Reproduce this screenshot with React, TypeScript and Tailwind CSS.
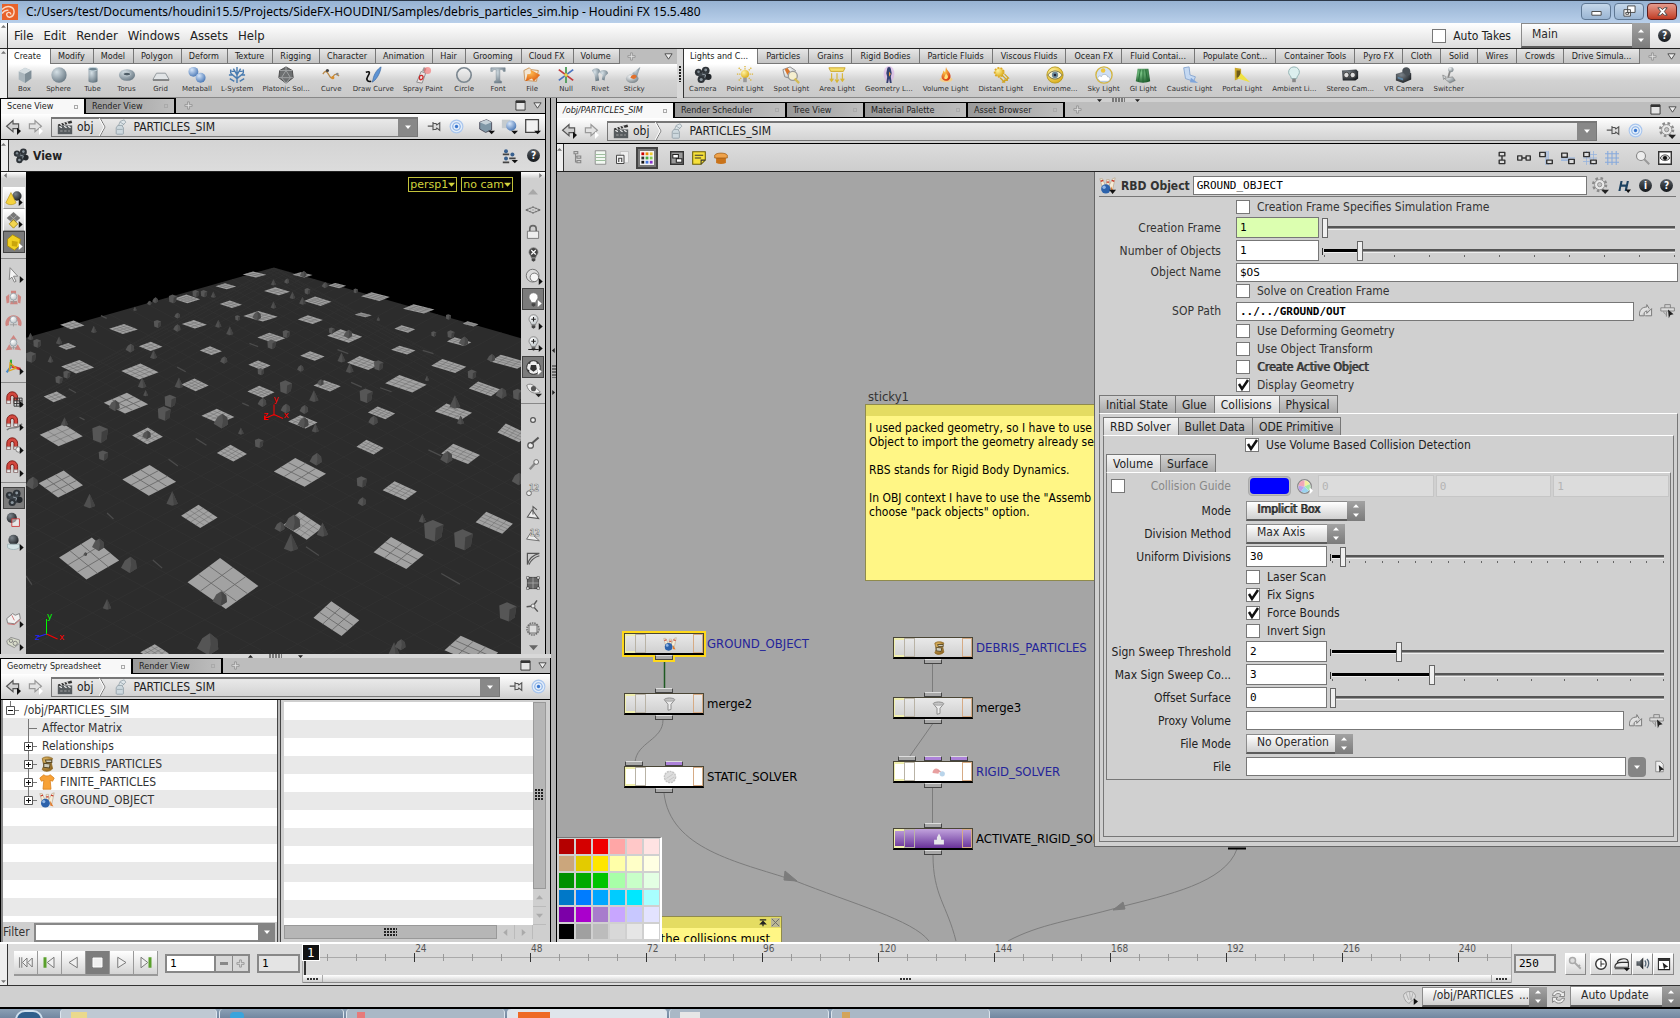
import React from "react";

/* ---------- shared pieces ---------- */

type Kids = { children?: React.ReactNode };

function Svg({ s = "size-5", box = "0 0 20 20", children }: Kids & { s?: string; box?: string }) {
  return (
    <svg viewBox={box} className={`${s} shrink-0`} fill="none" aria-hidden="true">
      {children}
    </svg>
  );
}

function Defs() {
  const stops: [string, string, string][] = [
    ["grey", "#f2f4f5", "#6f7a80"],
    ["steel", "#d5e0e6", "#62727d"],
    ["blue", "#d6e6fa", "#3f6fb0"],
    ["yellow", "#fff2a0", "#d9a80c"],
    ["dark", "#7d858c", "#16191c"],
    ["fire", "#ffd34d", "#d42a0a"],
    ["green", "#7fc98b", "#1c5a2b"],
    ["orange", "#ffb84d", "#d9540b"],
    ["pale", "#ffffff", "#b9c0c4"],
    ["tan", "#e8c06a", "#8a5f1c"],
  ];
  return (
    <svg className="absolute size-0" aria-hidden="true">
      <defs>
        {stops.map(([id, a, b]) => (
          <radialGradient key={id} id={id} cx="0.35" cy="0.3" r="0.8">
            <stop offset="0" stopColor={a} />
            <stop offset="1" stopColor={b} />
          </radialGradient>
        ))}
      </defs>
    </svg>
  );
}

const Tri = ({ d = "down", c = "#222", s = "size-2" }: { d?: "down" | "right" | "up" | "left"; c?: string; s?: string }) => (
  <Svg s={s} box="0 0 8 8">
    <path
      d={d === "down" ? "M0 2h8L4 6.500z" : d === "up" ? "M0 6h8L4 1.500z" : d === "right" ? "M2 0v8l4.500-4z" : "M6 0v8L1.500 4z"}
      fill={c}
    />
  </Svg>
);

function Spin() {
  return (
    <span className="pointer-events-none absolute inset-y-0 right-0 flex w-[18px] flex-col items-center justify-center gap-[3px] bg-gradient-to-b from-[#a2a2a2] to-[#7b7b7b]">
      <Tri d="up" c="#fff" s="size-[6px]" />
      <Tri c="#fff" s="size-[6px]" />
    </span>
  );
}

function Pick({ id, value, w, bold, label, h = "h-[20px]" }: { id: string; value: string; w: string; bold?: boolean; label?: string; h?: string }) {
  return (
    <span className={`relative block shrink-0 ${w} ${h}`}>
      <select
        id={id}
        aria-label={label}
        className={`block size-full appearance-none border border-b-2 border-[#8b8b8b] border-b-[#5c5c5c] bg-gradient-to-b from-white to-[#d0d0d0] pb-[2px] pl-[10px] pr-[18px] text-[12px] leading-none text-[#2a2a2a] ${bold ? "[text-shadow:1px_0_0_#2a2a2a]" : ""}`}
      >
        <option>{value}</option>
      </select>
      <Spin />
    </span>
  );
}

function Check({ id, on, children, bold }: Kids & { id: string; on?: boolean; bold?: boolean }) {
  return (
    <span className="flex items-center gap-[7px]">
      <span className="relative block size-[14px] shrink-0">
        <input
          id={id}
          type="checkbox"
          defaultChecked={on}
          className="peer block size-[14px] appearance-none border border-[#777] bg-white"
        />
        <svg viewBox="0 0 14 14" className="pointer-events-none absolute inset-0 hidden size-[14px] peer-checked:block" aria-hidden="true">
          <path d="M3 6l3 5 6-9" stroke="#111" strokeWidth="2.500" fill="none" />
        </svg>
      </span>
      {children && (
        <label htmlFor={id} className={`whitespace-nowrap text-[12px] ${bold ? "[text-shadow:1px_0_0_#333]" : ""}`}>
          {children}
        </label>
      )}
    </span>
  );
}

function Slider({ pct, ticks = 0, label }: { pct: number; ticks?: number; label: string }) {
  return (
    <span className="relative mx-[3px] block h-[20px] min-w-0 flex-1">
      <span className="absolute inset-x-[2px] top-[8px] h-[4px] border-t-2 border-b border-t-[#555] border-b-[#eee] bg-[#999]" />
      {pct > 0 && <span className="absolute left-[2px] top-[8px] h-[3px] bg-black" style={{ width: `${pct}%` }} />}
      {pct > 0 && <span className="absolute left-0 top-[7px] h-[7px] w-px bg-[#333]" />}
      {ticks > 0 && (
        <span className="absolute inset-x-[2px] top-[14px] flex justify-between">
          {Array.from({ length: ticks }, (_, i) => (
            <span key={i} className="h-[2px] w-px bg-[#666]" />
          ))}
        </span>
      )}
      <input
        type="range"
        min={0}
        max={1000}
        defaultValue={pct * 10}
        aria-label={label}
        className="absolute inset-0 m-0 block h-[20px] w-full appearance-none bg-transparent [&::-webkit-slider-thumb]:h-[20px] [&::-webkit-slider-thumb]:w-[6px] [&::-webkit-slider-thumb]:appearance-none [&::-webkit-slider-thumb]:border [&::-webkit-slider-thumb]:border-[#666] [&::-webkit-slider-thumb]:bg-[#f0f0f0]"
      />
    </span>
  );
}

/* ---------- small icons ---------- */

const HelpIcon = ({ t = "?" }: { t?: string }) => (
  <span className="flex size-[13px] shrink-0 items-center justify-center rounded-full bg-gradient-to-b from-[#5a6066] to-[#14181c] text-[10px] font-bold leading-none text-white">
    {t}
  </span>
);

const Gear = () => (
  <Svg s="size-[17px]">
    <circle cx="9" cy="9" r="7.500" stroke="#8a8a8a" strokeWidth="3" strokeDasharray="3 2.900" />
    <circle cx="9" cy="9" r="6" fill="#e8e8e8" stroke="#8a8a8a" />
    <circle cx="9" cy="9" r="2.500" fill="#c4c4c4" stroke="#8a8a8a" />
    <path d="M11 15h9l-4.500 5z" fill="#222" />
  </Svg>
);

const Pin = () => (
  <Svg s="size-[15px]">
    <path d="M1 9.500h7M8 4v11M8 6h4l1 2 4-3v10l-4-3-1 2H8z" stroke="#555" strokeWidth="1.500" fill="#ddd" />
  </Svg>
);

const Target = () => (
  <Svg s="size-[15px]">
    <circle cx="10" cy="10" r="8.500" stroke="#a9c6ee" strokeWidth="1.500" fill="#e3edf9" />
    <circle cx="10" cy="10" r="5" stroke="#86aee4" strokeWidth="1.500" />
    <circle cx="10" cy="10" r="2.200" fill="#3a78d0" />
  </Svg>
);

const Clapper = () => (
  <Svg s="size-4">
    <path d="M1 8h18v11H1z" fill="#565b5e" />
    <path d="M1 7l17-5 1 3L2 9z" fill="#333" />
    <path d="M4 5.500l2 2.500M8 4.500l2 2.500M12 3.500l2 2.500M3 9l3 2M9 9l3 2M14 9l3 2" stroke="#eee" strokeWidth="1.500" />
    <path d="M4 15h3M9 15h3M14 15h2" stroke="#bbb" />
  </Svg>
);

const Salt = () => (
  <Svg s="size-4">
    <path d="M4 11l2-3h5l2 3v7a1 1 0 01-1 1H5a1 1 0 01-1-1z" fill="#cdd8de" stroke="#8d9ca5" />
    <path d="M7 8l2-5 5-2 2 3-4 4z" fill="#dfe6ea" stroke="#94a2aa" />
    <path d="M5 13h7M9 4l5 3" stroke="#94a2aa" />
  </Svg>
);

const NavArrow = ({ dim, flip }: { dim?: boolean; flip?: boolean }) => (
  <Svg s="size-[16px]">
    <path
      d={flip ? "M18 9l-8-7v4H3v6h7v4z" : "M2 9l8-7v4h7v6h-7v4z"}
      fill={dim ? "#e2e2e2" : "#d0d0d0"}
      stroke={dim ? "#999" : "#555"}
      strokeWidth="1.500"
    />
    <path d="M15 11l5 4-5 5z" fill={dim ? "#fff" : "#111"} />
  </Svg>
);

const Bowling = ({ s = "size-4", arrow }: { s?: string; arrow?: boolean }) => (
  <Svg s={s}>
    <path d="M1 2l3 0 4 9-4 2zM9 3h3l0 11H9zM19 1l-3 1-5 10 5 3z" fill="#f6ecd8" stroke="#b8a58a" strokeWidth="0.800" />
    <path d="M2 5l3-1M9 6h3M15 4l3 1" stroke="#c8382a" strokeWidth="1.600" />
    <circle cx="8" cy="14" r="5.500" fill="#2c62ab" />
    <circle cx="6" cy="12" r="2" fill="#8fb6e6" />
    <path d="M14 11l4 7-4-1z" fill="#e07a2c" />
    {arrow && <path d="M12 15h8l-4 5z" fill="#111" />}
  </Svg>
);

const Bin = ({ s = "size-4" }: { s?: string }) => (
  <Svg s={s}>
    <path d="M4 3c4-3 10-2 13 0l-2 4 2 9c-4 4-10 4-13 1l2-5z" fill="url(#tan)" stroke="#8f6a24" />
    <path d="M8 5h8v3H9zM6 9l8 1-1 5-7-1z" fill="#cfccbc" stroke="#5a4a26" strokeWidth="1.300" />
  </Svg>
);

const Shirt = () => (
  <Svg s="size-4">
    <path d="M1 5l5-4c2 2 6 2 8 0l5 4-2 4-3-1 1 11H5L6 8 3 9z" fill="#f7a136" stroke="#d9821e" />
  </Svg>
);

const Funnel = ({ s = "size-4" }: { s?: string }) => (
  <Svg s={s}>
    <path d="M3 5c0-3 14-3 14 0l-5 6v7l-4 1v-8z" fill="#ececec" stroke="#8c8c8c" strokeWidth="1.300" />
    <ellipse cx="10" cy="5" rx="6.500" ry="2" fill="#c4c4c4" stroke="#999" />
  </Svg>
);

const reels = (
  <>
    <circle cx="13" cy="5" r="4.300" fill="#2e3338" />
    <circle cx="5" cy="7" r="4" fill="#2e3338" />
    <path d="M5 8l10-1 2 7-8 3-4-3z" fill="#3d444a" />
    <circle cx="16" cy="12" r="3.500" fill="#23272b" />
    <circle cx="8" cy="15" r="4" fill="#2e3338" />
    <circle cx="13" cy="4.500" r="1.600" fill="#8b969e" />
    <circle cx="5" cy="6.500" r="1.500" fill="#7b868e" />
    <circle cx="8" cy="15" r="1.700" fill="#8b969e" />
    <path d="M9 9l4 1-1 3" stroke="#98a3ab" />
  </>
);
const CameraIcon = ({ s = "size-[18px]" }: { s?: string }) => <Svg s={s}>{reels}</Svg>;

const Bulb = ({ s = "size-4", fill = "url(#pale)", mark }: { s?: string; fill?: string; mark?: string }) => (
  <Svg s={s}>
    <path d="M10 1c-4 0-6 3-6 6s3 4 3 7h6c0-3 3-4 3-7s-2-6-6-6z" fill={fill} stroke="#777" />
    <path d="M7.500 15h5v3l-2.500 1.500L7.500 18z" fill="#444" />
    {mark && <path d={mark} stroke={fill === "#444" ? "#fff" : "#222"} strokeWidth="1.500" />}
  </Svg>
);

const Magnet = ({ extra }: { extra?: React.ReactNode }) => (
  <Svg s="size-[18px]">
    <path d="M2 15V8a6 6 0 0112 0v7h-4V8a2 2 0 00-4 0v7z" fill="#d2473e" stroke="#7a1510" />
    <path d="M2 12h4v3H2zM10 12h4v3h-4z" fill="#eee" stroke="#888" strokeWidth="0.700" />
    {extra}
  </Svg>
);

const Jump = () => (
  <Svg s="size-4">
    <path d="M2 16c-1-7 3-11 9-11V2l3 5M2 16h6c-1-3 0-6 3-6v3l6-6v9H9" stroke="#777" strokeWidth="1.200" fill="#e0e0e0" />
  </Svg>
);

const Chooser = () => (
  <Svg s="size-4">
    <path d="M1 6h17v4H1z" fill="#ddd" stroke="#777" />
    <path d="M6 6V2h7v4M8 11v6M4 11l3 3" stroke="#777" />
    <path d="M10 8l7 6-4 1-2 4z" fill="#222" />
  </Svg>
);

/* ---------- shelf ---------- */

const shelfIcons: Record<string, React.ReactNode> = {
  Box: (
    <>
      <path d="M3 6l7-4 7 3v9l-7 5-7-4z" fill="#a9b5bc" />
      <path d="M3 6l7-4 7 3-7 4z" fill="#d5dde1" />
      <path d="M10 9l7-4v9l-7 5z" fill="#7f8e97" />
    </>
  ),
  Sphere: <circle cx="10" cy="10" r="8.500" fill="url(#steel)" />,
  Tube: (
    <>
      <path d="M5 3v14c0 2 10 2 10 0V3z" fill="url(#steel)" />
      <ellipse cx="10" cy="3.500" rx="5" ry="2" fill="#6f8591" stroke="#cad8df" />
    </>
  ),
  Torus: (
    <>
      <ellipse cx="10" cy="10" rx="9" ry="6.500" fill="url(#steel)" />
      <ellipse cx="10" cy="9" rx="4" ry="2" fill="#4d5c66" stroke="#c4d0d6" />
    </>
  ),
  Grid: (
    <>
      <path d="M5 8h10l4 7H1z" fill="#e1e4e6" stroke="#8b9296" />
      <path d="M1 15h18v1.500H1z" fill="#777" />
    </>
  ),
  Metaball: (
    <>
      <circle cx="6" cy="6.500" r="5.500" fill="url(#blue)" />
      <circle cx="14" cy="13" r="5.500" fill="url(#blue)" />
    </>
  ),
  "L-System": (
    <path d="M10 19v-9M10 14L3 8M10 14l7-6M10 10L6 3M10 10l4-7M5 10H1M15 10h4M3 8V4M17 8V4M8 6H4M12 6h4M10 10V1M7 17l-5-3M13 17l5-3" stroke="#4a7cb0" strokeWidth="1.600" />
  ),
  "Platonic Sol...": (
    <>
      <path d="M10 1l7 4 1 8-8 6-8-6 1-8z" fill="#6d6f70" stroke="#444" />
      <path d="M10 5l5 8H5zM10 1v4M3 5h14M2 13h3M18 13h-3M10 19l-5-6M10 19l5-6" stroke="#a5a7a8" />
    </>
  ),
  Curve: (
    <>
      <path d="M1 9c5-9 7 6 10 4s2-6 8-2" stroke="#b98a4a" strokeWidth="1.500" />
      <circle cx="6" cy="5" r="1.800" fill="#444" />
      <circle cx="12" cy="13" r="1.800" fill="#d98d2a" />
      <circle cx="17" cy="9" r="1.500" fill="#888" />
    </>
  ),
  "Draw Curve": (
    <>
      <path d="M2 7c6-2 4 2 2 5s0 6 4 5" stroke="#111" strokeWidth="1.800" />
      <path d="M19 1c-4 2-8 8-9 14l-1 3c4-2 9-9 10-17z" fill="#5d93d4" stroke="#3a669c" strokeWidth="0.700" />
    </>
  ),
  "Spray Paint": (
    <>
      <path d="M3 18l5-12 5 2-4 11z" fill="#e9e4e4" stroke="#888" />
      <path d="M9 5l2-4 3 2-2 4z" fill="#999" />
      <path d="M6 13c0-4 5-3 4 0s-4 3-4 0z" stroke="#cc2a2a" strokeWidth="1.500" />
      <circle cx="15" cy="5" r="4" fill="#f36b6b" fillOpacity="0.600" />
    </>
  ),
  Circle: <circle cx="10" cy="10" r="8" stroke="#7b8790" strokeWidth="1.800" />,
  Font: <path d="M2 2h16v4h-2l-1-2h-3v12l2 1v2H6v-2l2-1V4H5L4 6H2z" fill="url(#steel)" stroke="#7c8b94" strokeWidth="0.600" />,
  File: (
    <>
      <path d="M1 5l6-3 2 2 8 1-2 12-13-1z" fill="#f2e6d4" stroke="#c79256" />
      <path d="M3 17l2-8c5 1 4-3 3-5l11 6-7 7-2-3z" fill="url(#orange)" />
    </>
  ),
  Null: (
    <>
      <path d="M10 1v18" stroke="#4c9b57" strokeWidth="2" />
      <path d="M2 4l16 12" stroke="#c33d3d" strokeWidth="2" />
      <path d="M18 4L2 16" stroke="#4b74c0" strokeWidth="2" />
      <circle cx="10" cy="10" r="2" fill="#ecd34b" />
    </>
  ),
  Rivet: (
    <>
      <path d="M1 5c3-4 9-3 9 1l-2 3 1 7-4 1-1-7z" fill="url(#steel)" />
      <path d="M9 7c3-4 9-3 10 1l-3 3-1 5-3-1 1-5z" fill="url(#steel)" />
    </>
  ),
  Sticky: (
    <>
      <ellipse cx="8" cy="14" rx="7" ry="5" fill="url(#grey)" />
      <path d="M17 1l-9 7 5 5z" fill="url(#steel)" />
      <path d="M6 13c1-4 5-4 7-2-1 4-4 4-7 2z" fill="#e2702a" />
    </>
  ),
  Camera: reels,
  "Point Light": (
    <>
      <path d="M10 0v4M1 9h4M15 9h4M3 2l3 3M17 2l-3 3M3 16l3-3M17 16l-3-3" stroke="#dcb63c" strokeWidth="1.500" strokeDasharray="1.500 1" />
      <circle cx="10" cy="9" r="4.500" fill="url(#yellow)" />
      <path d="M8 13h4v5H8z" fill="#999" />
    </>
  ),
  "Spot Light": (
    <>
      <path d="M1 4l8-3 6 4-5 9-7-2z" fill="url(#pale)" stroke="#888" />
      <path d="M3 4l3-2 3 4-3 4z" fill="#d9762c" />
      <circle cx="12" cy="11" r="5" fill="#f5efcf" stroke="#999" strokeWidth="1.500" />
      <path d="M14 14l5 5" stroke="#d3bb55" strokeWidth="2.500" />
    </>
  ),
  "Area Light": (
    <>
      <path d="M1 2h18l-2 4H3z" fill="#f6df6b" stroke="#c9a427" />
      <path d="M4 8v9M10 8v10M16 8v9M2 14l2 3 2-3M8 15l2 3 2-3M14 14l2 3 2-3" stroke="#d8b638" strokeWidth="1.300" />
    </>
  ),
  "Geometry L...": (
    <>
      <ellipse cx="10" cy="9" rx="6" ry="9" fill="#d9b5e6" fillOpacity="0.700" />
      <path d="M8 3a2 2 0 114 0l1 5-1 4 1 7h-2l-1-5-1 5H7l1-7-1-4z" fill="#33406e" />
      <path d="M10 6l2 3-2 3z" fill="#f0a23a" />
    </>
  ),
  "Volume Light": (
    <>
      <ellipse cx="10" cy="15" rx="7" ry="3" fill="#f3cf8d" />
      <path d="M10 1c1 4 5 6 5 10a5 5 0 01-10 1c0-3 2-4 2-7l2 2z" fill="url(#fire)" />
      <path d="M10 8c1 2 3 3 2 5s-4 2-4 0z" fill="#ffe27a" />
    </>
  ),
  "Distant Light": (
    <>
      <circle cx="8" cy="7" r="5" fill="url(#yellow)" stroke="#dca92b" strokeWidth="2" strokeDasharray="2 1.500" />
      <path d="M11 10l6 6M14 9l5 5M9 13l5 5M17 13v3h-3M14 15v3h-3" stroke="#d0a524" strokeWidth="1.400" />
    </>
  ),
  "Environme...": (
    <>
      <circle cx="10" cy="10" r="9" fill="url(#yellow)" stroke="#b89a1e" />
      <path d="M2 10c4-6 12-6 16 0-4 6-12 6-16 0z" fill="#f7f2d2" stroke="#6d6a44" />
      <circle cx="10" cy="10" r="3.500" fill="#6b8a9c" />
      <circle cx="10" cy="10" r="1.500" fill="#223" />
    </>
  ),
  "Sky Light": (
    <>
      <circle cx="10" cy="10" r="9" fill="#cfdff5" stroke="#d3b541" strokeWidth="1.500" />
      <path d="M3 14c0-3 3-4 4-2 1-4 7-3 7 0 4 0 3 5 0 5H6z" fill="#fff" stroke="#9ab" strokeWidth="0.700" />
      <circle cx="9" cy="5" r="2.500" fill="#f0c63c" />
    </>
  ),
  "GI Light": (
    <>
      <path d="M4 3h12l2 14c-4 2-12 2-16 0z" fill="url(#green)" />
      <path d="M7 4L5 17M10 4v14M13 4l2 13" stroke="#1f6a31" />
    </>
  ),
  "Caustic Light": (
    <>
      <path d="M3 2l6-1 1 9 6 2-2 5-9-3z" fill="#c5d9f2" stroke="#86a5cf" />
      <path d="M11 13l8 6-9-1z" fill="#7fa5da" />
    </>
  ),
  "Portal Light": (
    <>
      <path d="M2 2l7 1v10l-7 3z" fill="#c9a72a" />
      <path d="M4 5h4v7l-4 1z" fill="#6c5a1a" />
      <path d="M9 8l10 10-10-3-4-1z" fill="#efe244" />
    </>
  ),
  "Ambient Li...": (
    <>
      <path d="M10 1c-4 0-6 3-6 6s3 4 3 7h6c0-3 3-4 3-7s-2-6-6-6z" fill="#dcefee" stroke="#8fb0b0" />
      <path d="M8 14h4v4H8z" fill="#888" />
    </>
  ),
  "Stereo Cam...": (
    <>
      <path d="M1 5l16-1 2 2v8l-3 2H2z" fill="url(#dark)" />
      <circle cx="6" cy="10" r="3" fill="#ddd" stroke="#333" />
      <circle cx="13" cy="10" r="3" fill="#ddd" stroke="#333" />
    </>
  ),
  "VR Camera": (
    <>
      <path d="M1 9l9-3 8 2v7l-9 4-8-3z" fill="url(#dark)" />
      <path d="M8 6c0-6 9-6 9 0v4l-4 1z" fill="#4b5258" />
      <path d="M3 12l6 2v2l-6-2z" fill="#5d86a5" />
    </>
  ),
  Switcher: (
    <>
      <circle cx="12" cy="4" r="3" fill="url(#grey)" />
      <path d="M11 6l-2 7" stroke="#888" strokeWidth="2" />
      <path d="M3 10l4 2-3 3zM5 14l9-2 3 4-6 3z" fill="url(#grey)" stroke="#777" strokeWidth="0.600" />
    </>
  ),
};

function Shelf({ tabs, tools, label, tabPad, toolPad }: { tabs: string[]; tools: string[]; label: string; tabPad: string; toolPad: string }) {
  return (
    <>
      <nav className="flex h-[15px] items-stretch bg-[#bdbdbd]" aria-label={label}>
        {tabs.map((t, i) => (
          <button
            key={t}
            className={`flex items-center whitespace-nowrap border-r border-[#777] text-[9px] leading-none text-[#222] ${
              i === 0 ? "bg-white pl-[6px] pr-[9px]" : `border-b bg-gradient-to-b from-[#e6e6e6] to-[#c4c4c4] ${tabPad}`
            }`}
          >
            {t}
          </button>
        ))}
        <span className="flex w-6 items-center justify-center">
          <Plus />
        </span>
        <span className="ml-auto flex items-center pr-1">
          <Drop />
        </span>
      </nav>
      <div className="flex h-[34px] items-start border-b border-[#888] bg-gradient-to-b from-white via-[#d2d2d2] to-[#c9c9c9] pt-[2px]">
        {tools.map((t) => (
          <button key={t} className={`flex min-w-[34px] flex-col items-center ${toolPad}`}>
            <Svg s="size-[18px]">{shelfIcons[t]}</Svg>
            <span className="whitespace-nowrap font-['DejaVu_Sans',sans-serif] text-[7px] leading-[10px] text-[#333]">{t}</span>
          </button>
        ))}
      </div>
    </>
  );
}

const Plus = () => (
  <Svg s="size-[9px]" box="0 0 10 10">
    <path d="M4 1h2v3h3v2H6v3H4V6H1V4h3z" fill="#ddd" stroke="#888" strokeWidth="0.800" />
  </Svg>
);
const Drop = () => (
  <Svg s="size-[9px]" box="0 0 10 10">
    <path d="M1 2h8L5 8z" fill="#eee" stroke="#444" />
  </Svg>
);
const Maxi = () => (
  <Svg s="size-[11px]" box="0 0 12 12">
    <path d="M1 1h10v10H1z" fill="#e4e4e4" stroke="#333" />
    <path d="M1 2h10" stroke="#333" strokeWidth="2.500" />
  </Svg>
);

function PaneTabs({ tabs }: { tabs: { t: string; w: string; i?: boolean }[] }) {
  return (
    <nav className="flex h-[16px] shrink-0 items-stretch border-b border-black bg-[#bdbdbd]">
      {tabs.map((x, i) => (
        <button
          key={x.t}
          className={`flex items-center justify-between whitespace-nowrap border-r-2 border-t border-black pl-[6px] pr-[6px] text-[9px] leading-none text-[#222] ${x.w} ${
            i === 0 ? "-mb-px bg-[#f8f8f8]" : "bg-gradient-to-r from-[#999] to-[#bebebe]"
          } ${x.i ? "italic" : ""}`}
        >
          {x.t}
          <span className="size-[4px] border border-[#aaa]" />
        </button>
      ))}
      <span className="flex w-6 items-center justify-center">
        <Plus />
      </span>
      <span className="ml-auto flex items-center gap-[7px] pr-[3px]">
        <Maxi />
        <Drop />
      </span>
    </nav>
  );
}

function PathBar({ children }: Kids) {
  return (
    <div className="flex h-[26px] shrink-0 items-center border-b border-black bg-gradient-to-b from-white to-[#cfcfcf] px-[4px]">
      <button aria-label="Back" className="mr-[6px]">
        <NavArrow />
      </button>
      <button aria-label="Forward" className="mr-[8px]">
        <NavArrow flip dim />
      </button>
      <div className="flex h-[20px] min-w-0 flex-1 items-center border border-t-2 border-[#777] bg-gradient-to-b from-[#e9e9e9] to-[#d3d3d3] pl-[5px] text-[12px] leading-none text-[#222]">
        <Clapper />
        <span className="ml-1">obj</span>
        <Svg s="ml-[6px] h-[18px] w-[7px]" box="0 0 7 18">
          <path d="M1 0l5 9-5 9" stroke="#777" />
          <path d="M0 0l5 9-5 9" stroke="#fff" />
        </Svg>
        <span className="ml-[7px] mr-[4px]">
          <Salt />
        </span>
        <span>PARTICLES_SIM</span>
        <button aria-label="Path history" className="ml-auto flex h-full w-[19px] items-center justify-center bg-[#888]">
          <Tri c="#fff" s="size-[6px]" />
        </button>
      </div>
      <div className="flex shrink-0 items-center pl-[9px]">{children}</div>
    </div>
  );
}

/* ---------- 3D viewport ---------- */

const tiles: number[][] = [
  [714, 313, 33, 9], [848, 314, 28, 8], [634, 348, 29, 9], [777, 363, 36, 12], [945, 346, 25, 8], [1052, 379, 40, 13],
  [891, 393, 38, 14], [525, 386, 37, 13], [648, 402, 31, 11], [1173, 416, 44, 14], [1018, 434, 24, 7], [205, 464, 34, 13],
  [348, 476, 40, 15], [546, 462, 35, 13], [731, 438, 48, 16], [870, 448, 35, 13], [1318, 461, 22, 8], [1134, 476, 29, 11],
  [191, 528, 25, 10], [424, 528, 33, 14], [761, 502, 39, 15], [966, 497, 49, 20], [1286, 514, 34, 13], [592, 541, 31, 13],
  [1130, 539, 34, 13], [876, 557, 34, 14], [220, 589, 46, 20], [394, 603, 52, 24], [728, 584, 31, 14], [1020, 578, 47, 21],
  [1257, 587, 49, 21], [1425, 574, 52, 21], [157, 679, 32, 16], [548, 643, 38, 19], [732, 664, 38, 18], [917, 646, 38, 17],
  [1137, 640, 58, 26], [1357, 655, 44, 22], [355, 698, 62, 31], [612, 737, 46, 22], [849, 754, 41, 20], [1069, 727, 38, 19],
  [1270, 724, 52, 25], [1435, 787, 42, 28], [174, 794, 60, 33], [415, 796, 43, 25], [651, 848, 42, 25], [1037, 830, 38, 22],
  [1290, 850, 54, 30], [841, 905, 73, 43], [173, 940, 62, 40], [420, 929, 75, 46], [1120, 960, 48, 28], [560, 1037, 51, 35],
  [252, 1163, 84, 63], [626, 1238, 99, 76], [850, 1065, 55, 42], [1117, 1147, 70, 48], [1384, 1056, 52, 33],
  [943, 1343, 64, 52], [435, 1445, 40, 25], [1320, 1440, 75, 46],
];
const cubes: number[][] = [
  [573, 370, 9], [550, 370, 9], [486, 386, 11], [443, 461, 10], [862, 363, 8], [803, 491, 10], [107, 519, 11], [90, 560, 14],
  [802, 650, 17], [1026, 676, 18], [1061, 585, 13], [479, 692, 16], [462, 729, 18], [283, 791, 22], [292, 855, 13],
  [1263, 492, 10], [1322, 612, 12], [168, 628, 10], [190, 612, 10], [762, 522, 12], [1215, 1080, 27], [1298, 1107, 26],
  [1422, 1323, 24], [1014, 934, 14], [732, 604, 9], [727, 818, 12], [930, 481, 8], [1215, 491, 7], [997, 362, 6],
  [1256, 440, 7], [667, 443, 7], [1450, 672, 14],
];
const rocks: number[][] = [
  [850, 312, 9], [910, 345, 8], [436, 390, 8], [720, 437, 12], [975, 491, 12], [1298, 513, 13], [366, 533, 12], [497, 473, 10],
  [628, 569, 10], [620, 752, 20], [800, 714, 13], [852, 717, 12], [850, 757, 15], [1403, 668, 15], [322, 705, 15],
  [885, 866, 17], [1250, 860, 17], [1014, 993, 12], [277, 1122, 17], [363, 1182, 22], [617, 1283, 20], [583, 1420, 30],
  [820, 1056, 22], [784, 1068, 14], [1121, 1421, 15], [92, 937, 17], [1450, 925, 17], [735, 696, 12], [1045, 750, 13],
  [412, 793, 12], [498, 436, 8], [898, 636, 9], [804, 333, 7], [1375, 563, 11], [842, 594, 9], [420, 398, 6], [241, 1150, 5],
];
const cones: number[][] = [
  [767, 336, 7], [820, 375, 8], [848, 391, 9], [767, 404, 8], [613, 460, 9], [645, 481, 10], [265, 477, 8], [432, 552, 10],
  [400, 637, 12], [503, 637, 12], [880, 676, 13], [980, 592, 11], [957, 561, 11], [1274, 694, 15], [253, 990, 16],
  [484, 983, 16], [904, 1076, 16], [816, 1114, 20], [302, 1300, 12], [1104, 1440, 20], [183, 753, 10], [676, 781, 8],
  [88, 498, 8], [168, 510, 9], [144, 566, 8], [884, 772, 10], [1183, 1042, 10], [1290, 748, 10], [599, 373, 7],
  [410, 668, 7], [1196, 623, 6], [380, 415, 5], [1060, 445, 5],
];
const slivers: number[][] = [
  [285, 436, 16, 8], [550, 804, 30, 20], [474, 866, 26, 20], [195, 655, 20, 12], [498, 590, 24, 14], [430, 1168, 26, 24],
  [302, 1027, 18, 18], [984, 636, 30, 14], [1236, 1208, 52, 32], [858, 1128, 36, 26], [1200, 838, 36, 18], [946, 538, 30, 12],
  [1065, 652, 32, 12], [700, 519, 24, 10], [76, 1215, 16, 26], [225, 740, 14, 8], [1184, 540, 30, 10], [680, 698, 18, 8],
];

/* scene units are finer than pixels: 2.8 across, 3 down */
const P = (x: number, y: number) => `${(x / 2.8).toFixed(1)},${(y / 3).toFixed(1)}`;

function Tile({ t: [x, y, w, h] }: { t: number[] }) {
  const s = -(x - 450) / 2200;
  const L = [x - w, y - 0.05 * h];
  const T = [x + s * w, y - h];
  const R = [x + w, y + 0.1 * h];
  const B = [x - s * w, y + h];
  const mix = (a: number[], b: number[], k: number) => P(a[0] + (b[0] - a[0]) * k, a[1] + (b[1] - a[1]) * k);
  const n = w > 36 && w < 60 ? 4 : 3;
  let d = "";
  for (let i = 1; i < n; i++) d += `M${mix(L, T, i / n)}L${mix(B, R, i / n)}M${mix(L, B, i / n)}L${mix(T, R, i / n)}`;
  return (
    <>
      <path d={`M${P(L[0], L[1])}L${P(T[0], T[1])}L${P(R[0], R[1])}L${P(B[0], B[1])}z`} fill="#a2a2a2" />
      <path d={d} stroke="#6a6a6a" strokeWidth={w > 60 ? 0.9 : 0.5} />
    </>
  );
}

function Scene() {
  let grid = "";
  for (let i = 0; i < 34; i++) {
    const k = (i / 33) ** 1.8;
    grid += `M${P(768 - 1900 * k, 292 + 577 * k)}L${P(768 - 1900 * k + 2600, 292 + 577 * k + 1500)}`;
    grid += `M${P(768 + 1900 * k, 292 + 577 * k)}L${P(768 + 1900 * k - 2600, 292 + 577 * k + 1500)}`;
  }
  return (
    <svg viewBox="27 2 494 481" preserveAspectRatio="xMidYMid slice" className="size-full bg-black" role="img" aria-label="Perspective view">
      <clipPath id="floor">
        <path d={`M${P(768, 292)}L${P(1480, 510)}L${P(1480, 1460)}L${P(60, 1460)}L${P(60, 507)}z`} />
      </clipPath>
      <g clipPath="url(#floor)">
        <rect x="0" y="0" width="560" height="500" fill="#2c2c2c" />
        <path d={grid} stroke="#343434" strokeWidth="0.600" fill="none" />
      </g>
      {tiles.map((t, i) => (
        <Tile key={i} t={t} />
      ))}
      {slivers.map(([x, y, a, b], i) => (
        <path key={i} d={`M${P(x, y)}L${P(x + a, y + b)}`} stroke="#4c4c4c" strokeWidth="1.300" />
      ))}
      {cones.map(([x, y, s], i) => (
        <g key={i}>
          <path d={`M${P(x, y - s * 1.3)}L${P(x + s, y + s)}L${P(x, y + s * 1.4)}L${P(x - s, y + s)}z`} fill="#505050" />
          <path d={`M${P(x, y - s * 1.3)}L${P(x + s, y + s)}L${P(x + s * 0.3, y + s * 1.3)}z`} fill="#434343" />
        </g>
      ))}
      {rocks.map(([x, y, s], i) => (
        <g key={i}>
          <path d={`M${P(x - s, y + s * 0.4)}L${P(x - s * 0.5, y - s * 0.6)}L${P(x + s * 0.2, y - s * 1.1)}L${P(x + s * 0.9, y - s * 0.5)}L${P(x + s, y + s * 0.5)}L${P(x + s * 0.1, y + s * 1.1)}z`} fill="#555" />
          <path d={`M${P(x + s * 0.2, y - s * 1.1)}L${P(x + s * 0.9, y - s * 0.5)}L${P(x + s, y + s * 0.5)}L${P(x + s * 0.1, y + s * 1.1)}L${P(x + s * 0.3, y)}z`} fill="#474747" />
        </g>
      ))}
      {cubes.map(([x, y, s], i) => (
        <g key={i}>
          <path d={`M${P(x - s, y - s * 0.8)}L${P(x - s * 0.1, y - s * 1.2)}L${P(x + s, y - s * 0.7)}L${P(x + s * 0.8, y + s * 0.7)}L${P(x + s * 0.1, y + s * 1.2)}L${P(x - s * 0.9, y + s * 0.8)}z`} fill="#565656" />
          <path d={`M${P(x + s * 0.2, y - s * 0.3)}L${P(x + s, y - s * 0.7)}L${P(x + s * 0.8, y + s * 0.7)}L${P(x + s * 0.1, y + s * 1.2)}z`} fill="#3f3f3f" />
        </g>
      ))}
      <g fontFamily="DejaVu Sans" fontSize="9">
        <path d="M274.500 245V234M274.500 244l-9 4M274.500 244l9 4M265 245v4h4" stroke="red" />
        <text x="274" y="232" fill="red">y</text>
        <text x="264" y="248" fill="red">z</text>
        <text x="284" y="248" fill="red">x</text>
        <path d="M47.500 464V448" stroke="#0f0" />
        <path d="M47.500 463l-9 3" stroke="#22f" />
        <path d="M47.500 463l11 5" stroke="red" />
        <text x="48" y="448" fill="#0f0">y</text>
        <text x="36" y="469" fill="#22f">z</text>
        <text x="60" y="469" fill="red">x</text>
      </g>
    </svg>
  );
}

/* ---------- viewport side bars ---------- */

function SideButton({ label, on, lit, children, arrow }: Kids & { label: string; on?: boolean; lit?: boolean; arrow?: boolean }) {
  return (
    <button
      aria-label={label}
      className={`relative flex h-[22px] w-[22px] shrink-0 items-center justify-center ${
        on ? "border border-[#444] bg-[#7b7b7b]" : lit ? "border border-white border-b-[#999] bg-gradient-to-b from-white to-[#d4d4d4]" : ""
      }`}
    >
      {children}
      {arrow && (
        <span className="absolute bottom-[2px] right-0">
          <Tri d="right" c={on ? "#fff" : "#111"} s="size-[7px]" />
        </span>
      )}
    </button>
  );
}

const Handle = ({ kind }: { kind: number }) => (
  <Svg s="size-[17px]">
    {kind === 0 && <path d="M1 9l4-3v10l-3 1zM19 9l-4-3v10l3 1zM7 14h7l1 4H6zM7 2h6v4H7z" fill="#cf8580" />}
    {kind === 1 && <path d="M3 16a7.500 7.500 0 1114 0" stroke="#cf8580" strokeWidth="4" />}
    {kind === 2 && <path d="M10 0l4 6-4 2-4-2zM1 18l4-7 4 6zM19 18l-4-7-4 6z" fill="#cf8580" />}
    <circle cx="10" cy="9" r="4" fill="url(#pale)" stroke="#9aa4ab" />
    <path d="M10 13v4M6 15h8" stroke="#999" />
  </Svg>
);

function LeftBar() {
  return (
    <div className="flex w-[25px] shrink-0 flex-col items-center bg-[#cfcfcf]">
      <div className="mb-[8px] flex h-[7px] w-full items-center bg-gradient-to-b from-white to-[#ccc] pl-[2px]">
        <Tri d="left" c="#777" s="size-[5px]" />
      </div>
      <SideButton label="Select objects" lit arrow>
        <Svg s="size-[17px]">
          <circle cx="14" cy="7" r="5.500" fill="url(#dark)" />
          <path d="M7 3l6 12c-3 3-9 3-12 0z" fill="#f5d33e" stroke="#b08c14" strokeWidth="0.700" />
        </Svg>
      </SideButton>
      <SideButton label="Select geometry" lit arrow>
        <Svg s="size-[17px]">
          <path d="M10 0l8 7-8 7-8-7z" fill="#777" />
          <path d="M6 4l8 7M14 4l-8 7" stroke="#aaa" />
          <path d="M10 9l5 5-5 5-5-5z" fill="#f3d550" stroke="#9d8217" />
        </Svg>
      </SideButton>
      <SideButton label="Select dynamics" on arrow>
        <Svg s="size-[17px]">
          <path d="M3 6l6-5 9 5-1 8-6 5-8-5z" fill="#f2d124" stroke="#a58809" />
          <path d="M8 8l7 1-1 6-6-1z" fill="#c9a50c" />
        </Svg>
      </SideButton>
      <hr className="mb-[4px] mt-[5px] w-full border-[#888]" />
      <SideButton label="Select" arrow>
        <Svg s="size-[17px]">
          <path d="M6 2l9 10h-5l3 6-2 1-3-6-3 3z" fill="#f4f4f4" stroke="#777" />
        </Svg>
      </SideButton>
      <div className="flex flex-col gap-[1px] pt-[1px]">
        <SideButton label="Move"><Handle kind={0} /></SideButton>
        <SideButton label="Rotate"><Handle kind={1} /></SideButton>
        <SideButton label="Scale"><Handle kind={2} /></SideButton>
        <SideButton label="Handles" arrow>
          <Svg s="size-[17px]">
            <path d="M7 10V2" stroke="#3a3" strokeWidth="2.500" />
            <path d="M8 10l10 3" stroke="#d33" strokeWidth="3" />
            <path d="M7 10l-5 7" stroke="#48c" strokeWidth="2.500" />
            <path d="M6 6l7 6-8 3z" stroke="#d9a520" strokeWidth="1.500" />
          </Svg>
        </SideButton>
      </div>
      <hr className="my-[5px] w-full border-[#888]" />
      <div className="flex flex-col gap-[1px]">
        <SideButton label="Snap to grid" arrow>
          <Magnet extra={<path d="M10 9h9v9h-9zM13 9v9M16 9v9M10 12h9M10 15h9" stroke="#333" />} />
        </SideButton>
        <SideButton label="Snap to curve" arrow>
          <Magnet extra={<path d="M2 19c6-6 9 2 17-7" stroke="#777" strokeWidth="1.500" />} />
        </SideButton>
        <SideButton label="Snap to point" arrow>
          <Magnet extra={<circle cx="15" cy="15" r="3" fill="#eee" stroke="#777" />} />
        </SideButton>
        <SideButton label="Multi snap" arrow><Magnet /></SideButton>
      </div>
      <hr className="mb-[4px] mt-[3px] w-full border-[#888]" />
      <SideButton label="View tool" on><CameraIcon /></SideButton>
      <SideButton label="Render region">
        <Svg s="size-[17px]">
          <circle cx="8" cy="7" r="6" fill="url(#dark)" />
          <path d="M8 8h9v9H8z" stroke="#c33" fill="#fff" fillOpacity="0.500" />
        </Svg>
      </SideButton>
      <SideButton label="Render" arrow>
        <Svg s="size-[17px]">
          <circle cx="10" cy="7" r="6" fill="url(#dark)" />
          <path d="M3 12h14v4c-4 3-10 3-14 0z" fill="#d5e4e6" stroke="#9fb4b8" />
        </Svg>
      </SideButton>
      <div className="mt-auto flex flex-col gap-[1px] pb-[1px]">
        <SideButton label="Flipbook" arrow>
          <Svg s="size-[17px]">
            <path d="M2 9l7-6 3 2 5-2 1 6-7 6-8-1z" fill="#f2f2f2" stroke="#777" />
            <path d="M3 15l8 1 7-6M8 5l3 6" stroke="#c66" />
          </Svg>
        </SideButton>
        <SideButton label="Film" arrow>
          <Svg s="size-[17px]">
            <path d="M2 8l5-4 10 3v4l-6 5-8-4z" fill="#d9dccb" stroke="#888" />
            <circle cx="7" cy="8" r="2" stroke="#777" />
            <circle cx="12" cy="11" r="2.500" stroke="#777" />
          </Svg>
        </SideButton>
      </div>
    </div>
  );
}

function RightBar() {
  const low: [string, React.ReactNode][] = [
    ["Points", <circle cx="10" cy="10" r="3" fill="#eee" stroke="#555" strokeWidth="1.500" />],
    ["Point normals", <><circle cx="7" cy="13" r="3.500" fill="#eee" stroke="#555" strokeWidth="1.500" /><path d="M8 11l9-8" stroke="#555" strokeWidth="2.500" /></>],
    ["Point trails", <><path d="M6 14l8-9" stroke="#888" strokeWidth="3" /><circle cx="14" cy="5" r="3" fill="#eee" stroke="#555" /></>],
    ["Point numbers", <><circle cx="5" cy="14" r="3" fill="#eee" stroke="#555" /><text x="5" y="11" fontSize="10" fontWeight="bold" fill="#eee" stroke="#666" strokeWidth="0.600">12</text></>],
    ["Primitive normals", <><path d="M3 15l6-9 8 11z" fill="#eee" stroke="#555" strokeWidth="1.300" /><path d="M10 12V2l5 4" stroke="#555" strokeWidth="1.300" /></>],
    ["Primitive numbers", <><path d="M2 14l5-8 11 10z" fill="#eee" stroke="#555" /><text x="6" y="10" fontSize="10" fontWeight="bold" fill="#eee" stroke="#666" strokeWidth="0.600">12</text></>],
    ["Profile curves", <path d="M3 17V3h15M3 17C5 9 10 5 18 3M5 17C8 10 12 8 18 6" stroke="#555" strokeWidth="1.500" />],
    ["Control hulls", <><path d="M3 3h14v14H3z" fill="#666" stroke="#333" /><path d="M10 3v14M3 10h14" stroke="#aaa" /><path d="M2 2h3v3H2zM15 2h3v3h-3zM2 15h3v3H2zM15 15h3v3h-3z" fill="#eee" stroke="#333" strokeWidth="0.700" /></>],
    ["Vertices", <><path d="M2 11l8-1 5-7M10 10l6 7" stroke="#555" strokeWidth="1.800" /><circle cx="10" cy="10" r="2.500" fill="#eee" stroke="#555" /></>],
    ["Field guide", <><circle cx="10" cy="10" r="7.500" stroke="#777" strokeWidth="2" strokeDasharray="2 1" /><path d="M5 5h10v10H5z" fill="#ddd" stroke="#555" /></>],
  ];
  return (
    <div className="flex w-[24px] shrink-0 flex-col items-center bg-[#cfcfcf]">
      <div className="mb-[5px] flex h-[7px] w-full items-center justify-end bg-gradient-to-b from-white to-[#ccc] pr-[2px]">
        <Tri d="right" c="#777" s="size-[5px]" />
      </div>
      <span className="flex h-[15px] items-center">
        <Tri d="up" c="#a8a8a8" s="size-[10px]" />
      </span>
      <SideButton label="Reference plane">
        <Svg s="size-[16px]">
          <path d="M1 10l9-4 9 4-9 4z" fill="#999" stroke="#555" />
          <path d="M4 8.500l9 4.500M7 7l9 4.500M16 8.500L7 13M13 7l-9 4.500" stroke="#ddd" />
        </Svg>
      </SideButton>
      <SideButton label="Lock camera">
        <Svg s="size-[16px]">
          <path d="M6 9V6a4 4 0 018 0v3" stroke="#666" strokeWidth="2" />
          <path d="M3 9h14v9H3z" fill="#eee" stroke="#666" />
        </Svg>
      </SideButton>
      <SideButton label="No lights"><Bulb s="size-[15px]" fill="#444" mark="M7 4l6 6M13 4l-6 6" /></SideButton>
      <SideButton label="Shading" arrow>
        <Svg s="size-[17px]">
          <circle cx="9" cy="9" r="7.500" stroke="#666" fill="#ddd" />
          <circle cx="11" cy="11" r="5" stroke="#666" fill="#f6f6f6" />
        </Svg>
      </SideButton>
      <span className="h-px" />
      <SideButton label="Headlight" on arrow><Bulb s="size-[15px]" fill="#fff" /></SideButton>
      <SideButton label="Lighting" arrow><Bulb s="size-[15px]" mark="M10 4v6M7 7h6" /></SideButton>
      <SideButton label="Shadows" arrow><Bulb s="size-[15px]" mark="M10 4v6M7 7h6M3 18h14" /></SideButton>
      <span className="h-[2px]" />
      <SideButton label="Materials" on arrow>
        <Svg s="size-[17px]">
          <circle cx="10" cy="10" r="8" fill="#eee" stroke="#222" />
          <path d="M7 7h6l1 5-4 3-4-3z" fill="#333" />
          <path d="M3 5l4-3-1 4zM17 5l-4-3 1 4zM2 12l3 1v4zM18 12l-3 1v4z" fill="#333" />
        </Svg>
      </SideButton>
      <SideButton label="Visibility">
        <Svg s="size-[17px]">
          <path d="M2 5c6-4 10 2 16 8-6 3-14 1-16-8z" fill="#eee" stroke="#777" />
          <circle cx="10" cy="9" r="3" fill="#555" />
          <path d="M12 15h8l-4 4z" fill="#222" />
        </Svg>
      </SideButton>
      <hr className="my-[3px] w-full border-[#888]" />
      <div className="flex flex-1 flex-col justify-between pt-[2px]">
        {low.map(([n, d]) => (
          <SideButton key={n} label={n}>
            <Svg s="size-[16px]">{d}</Svg>
          </SideButton>
        ))}
      </div>
      <span className="flex h-[14px] items-center">
        <Tri c="#666" s="size-[9px]" />
      </span>
    </div>
  );
}

/* ---------- tree ---------- */

const treeRows: { t: string; ic?: React.ReactNode; root?: boolean; leaf?: boolean; last?: boolean }[] = [
  { t: "/obj/PARTICLES_SIM", root: true },
  { t: "Affector Matrix", leaf: true },
  { t: "Relationships" },
  { t: "DEBRIS_PARTICLES", ic: <Bin /> },
  { t: "FINITE_PARTICLES", ic: <Shirt /> },
  { t: "GROUND_OBJECT", ic: <Bowling />, last: true },
];

function TreeMark({ root, leaf, last }: { root?: boolean; leaf?: boolean; last?: boolean }) {
  return (
    <Svg s={root ? "ml-[1px] h-[18px] w-[20px]" : "ml-[19px] h-[18px] w-[20px]"} box="0 0 20 18">
      {!root && <path d={last ? "M6.500 0v9" : "M6.500 0v18"} stroke="#777" />}
      {root && <path d="M6.500 0v5" stroke="#777" />}
      <path d={leaf ? "M7 9.500h8" : "M11 9.500h4"} stroke="#777" />
      {!leaf && <path d="M2.500 5.500h8v8h-8z" fill="#fff" stroke="#555" />}
      {!leaf && <path d={root ? "M4 9.500h5" : "M4 9.500h5M6.500 7v5"} stroke="#111" />}
    </Svg>
  );
}

const Dots = ({ v, c = "#222" }: { v?: boolean; c?: string }) => (
  <Svg s={v ? "h-[13px] w-[9px]" : "h-[9px] w-[13px]"} box={v ? "0 0 9 13" : "0 0 13 9"}>
    <path
      d={v ? "M0 1h9M0 4h9M0 7h9M0 10h9" : "M0 1h13M0 4h13M0 7h13"}
      stroke={c}
      strokeWidth="2"
      strokeDasharray="2 1"
    />
  </Svg>
);

const striped = "bg-[repeating-linear-gradient(180deg,#fff_0,#fff_18px,#e9e9e9_18px,#e9e9e9_36px)]";

function Spreadsheet() {
  return (
    <div className="flex min-h-0 flex-1 bg-[#cfcfcf]">
      <div className="flex min-w-0 flex-1 flex-col border-l-2 border-[#888]">
        <ul className={`flex-1 overflow-hidden pt-px ${striped}`}>
          {treeRows.map((r) => (
            <li key={r.t} className="flex h-[18px] items-center text-[12px] leading-none text-[#333]">
              <TreeMark root={r.root} leaf={r.leaf} last={r.last} />
              {r.ic && <span className="-ml-[3px] mr-[5px]">{r.ic}</span>}
              <span>{r.t}</span>
            </li>
          ))}
        </ul>
        <div className="flex h-[20px] items-center gap-[4px] text-[12px] leading-none text-[#333]">
          <label htmlFor="filter">Filter</label>
          <input id="filter" className="h-[19px] min-w-0 flex-1 border-2 border-r-0 border-[#888] bg-white px-1" />
          <button aria-label="Filter menu" className="-ml-[4px] mr-[2px] flex h-[19px] w-[17px] items-center justify-center bg-[#848484]">
            <Tri c="#fff" s="size-[6px]" />
          </button>
        </div>
      </div>
      <div className="flex w-[4px] items-center justify-center border-x border-[#444] bg-[#bbb]" />
      <div className="grid w-[269px] grid-cols-[1fr_13px] grid-rows-[1fr_14px] pb-[3px] pl-[3px] pr-[4px] pt-[2px]">
        <div className={striped} />
        <div className="flex flex-col">
          <div className="flex flex-1 items-center justify-center border border-[#999] bg-[#b6b6b6]">
            <Dots v />
          </div>
          <button aria-label="Scroll up" className="flex h-[18px] items-center justify-center border-b border-[#bbb]"><Tri d="up" c="#aaa" s="size-[7px]" /></button>
          <button aria-label="Scroll down" className="flex h-[18px] items-center justify-center border-b border-[#bbb]"><Tri c="#aaa" s="size-[7px]" /></button>
        </div>
        <div className="flex">
          <div className="flex flex-1 items-center justify-center border border-[#999] bg-[#b6b6b6]">
            <Dots />
          </div>
          <button aria-label="Scroll left" className="flex w-[18px] items-center justify-center border-r border-[#bbb]"><Tri d="left" c="#aaa" s="size-[7px]" /></button>
          <button aria-label="Scroll right" className="flex w-[18px] items-center justify-center border-r border-[#bbb]"><Tri d="right" c="#aaa" s="size-[7px]" /></button>
        </div>
      </div>
    </div>
  );
}

/* ---------- network ---------- */

type N = { t: string; pos: string; icon: React.ReactNode; link?: boolean; sel?: boolean; body?: string; ins?: [string, boolean][] };

const nodes: N[] = [
  { t: "GROUND_OBJECT", pos: "left-[67px] top-[461px]", icon: <Bowling s="size-[14px]" />, link: true, sel: true },
  { t: "merge2", pos: "left-[67px] top-[521px]", icon: <Funnel s="size-[15px]" />, ins: [["left-[31px]", false]] },
  {
    t: "STATIC_SOLVER", pos: "left-[67px] top-[594px]", body: "bg-white",
    icon: <Svg s="size-[14px]"><circle cx="10" cy="10" r="8" fill="#ddd" stroke="#c4c4c4" strokeWidth="2" strokeDasharray="3 1" /><path d="M5 12l9-6M8 15l8-5" stroke="#bbb" /></Svg>,
    ins: [["left-[1px]", false], ["left-[41px]", true]],
  },
  { t: "DEBRIS_PARTICLES", pos: "left-[336px] top-[465px]", icon: <Bin s="size-[14px]" />, link: true },
  { t: "merge3", pos: "left-[336px] top-[525px]", icon: <Funnel s="size-[15px]" />, ins: [["left-[31px]", false]] },
  {
    t: "RIGID_SOLVER", pos: "left-[336px] top-[589px]", link: true, body: "bg-white",
    icon: <Svg s="size-[15px]"><path d="M2 12c0-6 7-8 9-3l-1 4z" fill="#e8a0a0" /><path d="M9 8l4 3" stroke="#d99" strokeWidth="2" /><circle cx="15" cy="13" r="3.500" fill="#b9d4ea" /></Svg>,
    ins: [["left-[5px]", false], ["left-[31px]", true], ["left-[57px]", true]],
  },
  {
    t: "ACTIVATE_RIGID_SOLVER", pos: "left-[336px] top-[656px]", body: "bg-gradient-to-b from-[#c2a3dd] to-[#6a3199]",
    icon: <Svg s="size-[14px]"><path d="M10 2l3 6v3h4v7H3v-7h4V8z" fill="#e6e6ea" /></Svg>,
    ins: [["left-[31px]", false]],
  },
];

function Connector({ at, purple }: { at: string; purple?: boolean }) {
  return (
    <span className={`absolute h-[5px] w-[18px] border border-[#444] border-t-[#ddd] ${at} ${purple ? "bg-[#ad82da]" : "bg-[#a8a8a8]"}`} />
  );
}

function Node({ n }: { n: N }) {
  return (
    <div className={`absolute h-[22px] w-[80px] ${n.pos}`}>
      {n.sel && (
        <>
          <span className="absolute -inset-[2px] bg-[#ffd91a]" />
          <span className="absolute left-[29px] top-[22px] h-[7px] w-[22px] bg-[#ffd91a]" />
        </>
      )}
      {n.ins?.map(([at, p]) => (
        <Connector key={at} at={`${at} -top-[5px]`} purple={p} />
      ))}
      <Connector at="left-[31px] top-[22px]" />
      <div className={`absolute inset-0 flex items-center border border-b-2 border-[#4a4636] border-b-black ${n.body ?? "bg-gradient-to-b from-[#e9e9e9] to-[#d0d0d0]"}`}>
        <span className="h-full w-[10px] border-2 border-l-[1px] border-r-0 border-[#f0efae]" />
        <span className="h-full w-[11px] border border-[#b9b3a6]" />
        <span className="flex flex-1 items-center justify-center">{n.icon}</span>
        <span className="h-full w-[10px] border border-[#d6ab85]" />
      </div>
      <span className={`absolute left-[83px] top-[2px] whitespace-nowrap text-[13px] leading-[18px] ${n.link ? "text-[#24249a]" : "text-black"}`}>{n.t}</span>
    </div>
  );
}

const palette = [
  "bg-[#b40000]", "bg-[#d40000]", "bg-[#f00000]", "bg-[#ffa6a6]", "bg-[#ffc8c8]", "bg-[#ffe3e3]",
  "bg-[#cba67c]", "bg-[#e3cb00]", "bg-[#ffe600]", "bg-[#ffffa8]", "bg-[#ffffc8]", "bg-[#ffffe3]",
  "bg-[#009000]", "bg-[#00aa00]", "bg-[#00c400]", "bg-[#a8ffa8]", "bg-[#c8ffc8]", "bg-[#e3ffe3]",
  "bg-[#0078c8]", "bg-[#007cff]", "bg-[#00a6ff]", "bg-[#00ccff]", "bg-[#00e8ff]", "bg-[#a8ffff]",
  "bg-[#7c00a8]", "bg-[#aa00cc]", "bg-[#a87ccc]", "bg-[#c8a6ff]", "bg-[#c8c8ff]", "bg-[#e3e3ff]",
  "bg-black", "bg-[#a0a0a0]", "bg-[#bcbcbc]", "bg-[#d8d8d8]", "bg-[#e6e6e6]", "bg-white",
];

function Network() {
  return (
    <div className="relative min-h-0 flex-1 overflow-hidden bg-[#a5a5a5]">
      <svg className="absolute left-0 top-0 h-[769px] w-[1123px]" viewBox="557 173 1123 769" fill="none" stroke="#7c7c7c" aria-hidden="true">
        <path d="M664.500 661v30" stroke="#1f5a22" strokeWidth="1.500" />
        <path d="M663 721c0 20-26 22-28 42M664 794c6 56 74 69 129 87 60 24 120 40 136 61" />
        <path d="M932.500 665v30M932.500 725l-24 34M932.500 789v37M933 856c0 40 14 50 23 86" />
        <path d="M1237 850c-12 34-70 46-117 58-50 14-80 17-112 34" />
        <path d="M785 872l12 10-13-1zM1123 903l-10 8 12-1z" fill="#7c7c7c" />
        <path d="M1228 849.500h18" stroke="#000" strokeWidth="2" />
      </svg>
      {nodes.map((n) => (
        <Node key={n.t} n={n} />
      ))}

      <div className="absolute left-[308px] top-[214px] w-[240px]">
        <p className="pl-[3px] pt-[4px] text-[13px] leading-[14px] text-[#333]">sticky1</p>
        <div className="h-[177px] border border-[#8f8a4c] bg-[#fff685]">
          <div className="h-[11px] bg-[#e4dc62]" />
          <div className="whitespace-nowrap pl-[3px] pt-[5px] text-[12px] leading-[14px] text-black">
            <p>I used packed geometry, so I have to use</p>
            <p className="mb-[14px]">Object to import the geometry already se</p>
            <p className="mb-[14px]">RBS stands for Rigid Body Dynamics.</p>
            <p>In OBJ context I have to use the "Assemb</p>
            <p>choose "pack objects" option.</p>
          </div>
        </div>
      </div>

      <div className="absolute bottom-0 left-[60px] h-[26px] w-[165px] border border-b-0 border-[#8f8a4c] bg-[#fff685]">
        <div className="flex h-[11px] items-center justify-end gap-1 bg-[#e4dc62] pr-px">
          <Svg s="size-[8px]" box="0 0 10 10"><path d="M1 1h8M5 9V3M2 6l3-3 3 3z" stroke="#222" strokeWidth="1.500" fill="#222" /></Svg>
          <Svg s="size-[9px]" box="0 0 10 10"><path d="M0 0h10v10H0z" fill="#bbb794" /><path d="M1 1l8 8M9 1L1 9" stroke="#666" /></Svg>
        </div>
        <p className="whitespace-nowrap pr-[11px] pt-[4px] text-right text-[13px] leading-[14px] text-black">the collisions must</p>
      </div>

      <div className="absolute bottom-0 left-0 grid grid-cols-[repeat(6,15px)] gap-[2px] border-r-2 border-t border-r-white border-t-[#777] bg-[#d0d0d0] pb-[3px] pl-[2px] pr-px pt-px">
        {palette.map((c, i) => (
          <button key={i} aria-label={`Colour ${i + 1}`} className={`h-[15px] ${c}`} />
        ))}
      </div>

      <Params />
    </div>
  );
}

/* ---------- parameter panel ---------- */

const mono = "font-['DejaVu_Sans_Mono',monospace] text-[11px] leading-none text-black";

function Tabs({ items, on }: { items: string[]; on: string }) {
  return (
    <div className="flex h-[18px]" role="tablist">
      {items.map((t) => (
        <button
          key={t}
          role="tab"
          aria-selected={t === on}
          className={`border border-b-0 border-[#777] pl-[6px] pr-[7px] text-[12px] leading-none [&+&]:border-l-0 ${
            t === on ? "bg-gradient-to-b from-[#f6f6f6] to-[#d6d6d6]" : "bg-gradient-to-b from-[#d2d2d2] to-[#aaa]"
          }`}
        >
          {t}
        </button>
      ))}
    </div>
  );
}

function Row({ label, id, inner, h = "h-[23px]", children }: Kids & { label?: string; id?: string; inner?: boolean; h?: string }) {
  return (
    <div className={`grid items-center gap-x-[15px] ${inner ? "grid-cols-[124px_minmax(0,1fr)]" : "grid-cols-[126px_minmax(0,1fr)]"} ${h}`}>
      {label ? (
        <label htmlFor={id} className="whitespace-nowrap text-right text-[12px] leading-none">
          {label}
        </label>
      ) : (
        <span />
      )}
      <div className="flex min-w-0 items-center">{children}</div>
    </div>
  );
}

const Num = ({ id, v, w = "w-[83px]", green }: { id: string; v: string; w?: string; green?: boolean }) => (
  <input id={id} defaultValue={v} className={`h-[21px] shrink-0 border border-[#777] px-[3px] ${w} ${mono} ${green ? "bg-[#dcffb0]" : "bg-white"}`} />
);

function Params() {
  return (
    <section className="absolute right-0 top-0 w-[586px] border-b border-l border-[#666] bg-[#d0d0d0] pb-[4px] text-[#333]">
      <header className="mx-1 flex h-[25px] items-center border-b border-[#777] pt-[3px]">
        <Bowling s="size-[17px]" arrow />
        <label htmlFor="nodename" className="ml-[5px] mr-[3px] whitespace-nowrap text-[12px] font-bold leading-none">RBD Object</label>
        <input id="nodename" defaultValue="GROUND_OBJECT" className={`h-[19px] min-w-0 flex-1 border border-[#777] bg-white px-[3px] ${mono}`} />
        <div className="flex items-center gap-[8px] pl-[5px] pr-[3px]">
          <Gear />
          <Svg s="size-[14px]">
            <path d="M5 3h3l-1 5h6l1-5h3l-3 14h-3l1-6H6l-1 6H2z" fill="#1d4260" />
            <path d="M12 15h8l-4 5z" fill="#111" />
          </Svg>
          <HelpIcon t="i" />
          <HelpIcon />
        </div>
      </header>

      <Row h="h-[19px]"><Check id="cfs">Creation Frame Specifies Simulation Frame</Check></Row>
      <Row label="Creation Frame" id="cf"><Num id="cf" v="1" green /><Slider pct={0} label="Creation Frame" /></Row>
      <Row label="Number of Objects" id="no"><Num id="no" v="1" /><Slider pct={10} ticks={11} label="Number of Objects" /></Row>
      <Row h="h-[20px]" label="Object Name" id="on">
        <input id="on" defaultValue="$OS" className={`mr-[2px] h-[19px] min-w-0 flex-1 border border-[#777] bg-white px-[3px] ${mono}`} />
      </Row>
      <Row h="h-[18px]"><Check id="soc">Solve on Creation Frame</Check></Row>
      <Row h="h-[22px]" label="SOP Path" id="sp">
        <input id="sp" defaultValue="../../GROUND/OUT" className={`h-[19px] min-w-0 flex-1 border border-[#777] bg-white px-[3px] font-bold ${mono}`} />
        <span className="flex gap-[6px] px-[4px]"><Jump /><Chooser /></span>
      </Row>
      <Row h="h-[18px]"><Check id="udg">Use Deforming Geometry</Check></Row>
      <Row h="h-[18px]"><Check id="uot">Use Object Transform</Check></Row>
      <Row h="h-[18px]"><Check id="cao" bold>Create Active Object</Check></Row>
      <Row h="h-[18px]"><Check id="dg" on>Display Geometry</Check></Row>

      <div className="ml-[4px] mr-[2px] pt-px text-[#222]">
        <Tabs items={["Initial State", "Glue", "Collisions", "Physical"]} on="Collisions" />
        <div className="border border-[#777] border-t-white bg-[#d0d0d0] px-[3px] pb-[4px] pt-[3px]">
          <Tabs items={["RBD Solver", "Bullet Data", "ODE Primitive"]} on="RBD Solver" />
          <div className="border border-[#777] border-t-white px-[2px] pb-[56px]">
            <div className="flex h-[18px] items-center pl-[139px]"><Check id="uvb" on>Use Volume Based Collision Detection</Check></div>
            <Tabs items={["Volume", "Surface"]} on="Volume" />
            <div className="border border-[#777] border-t-white pr-px pb-px">
              <div className="grid h-[26px] grid-cols-[124px_minmax(0,1fr)] items-center gap-x-[15px]">
                <div className="flex items-center justify-between pl-[4px]">
                  <Check id="cg" />
                  <label htmlFor="cg" className="text-[12px] leading-none text-[#888]">Collision Guide</label>
                </div>
                <div className="flex min-w-0 items-center">
                  <input type="color" aria-label="Guide colour" defaultValue="#0000ff" className="ml-[2px] h-[20px] w-[43px] shrink-0 appearance-none rounded border border-[#aaa] bg-[#bbb] p-px [&::-webkit-color-swatch-wrapper]:p-0 [&::-webkit-color-swatch]:rounded-sm [&::-webkit-color-swatch]:border-0" />
                  <span className="mx-[5px]">
                    <Svg s="size-[17px]">
                      <circle cx="10" cy="10" r="8" fill="#fafafa" stroke="#888" strokeWidth="1.500" />
                      <path d="M10 10V3a7 7 0 016 4z" fill="#f4f09a" /><path d="M10 10l6-3a7 7 0 01-1 8z" fill="#a7e9a9" />
                      <path d="M10 10l5 5a7 7 0 01-9 1z" fill="#9ad3f0" /><path d="M10 10l-4 6a7 7 0 01-3-7z" fill="#b8a2ea" /><path d="M10 10L3 9a7 7 0 017-6z" fill="#f0a7b8" />
                      <path d="M16 11l4 4-4 4z" fill="#fff" />
                    </Svg>
                  </span>
                  <div className="flex min-w-0 flex-1 gap-[2px]">
                    {["0", "0", "1"].map((v, i) => (
                      <input key={i} disabled aria-label={`Guide channel ${i + 1}`} defaultValue={v} className="h-[22px] w-0 min-w-0 flex-1 border border-[#c6c6c6] bg-[#dcdcdc] px-[3px] font-['DejaVu_Sans_Mono',monospace] text-[11px] text-[#b4b4b4]" />
                    ))}
                  </div>
                </div>
              </div>
              <Row inner label="Mode" id="mode"><Pick id="mode" value="Implicit Box" w="w-[119px]" bold /></Row>
              <Row inner label="Division Method" id="dm"><Pick id="dm" value="Max Axis" w="w-[99px]" /></Row>
              <Row inner label="Uniform Divisions" id="ud"><Num id="ud" v="30" w="w-[81px]" /><Slider pct={3} ticks={21} label="Uniform Divisions" /></Row>
              <Row inner h="h-[18px]"><Check id="ls">Laser Scan</Check></Row>
              <Row inner h="h-[18px]"><Check id="fs" on>Fix Signs</Check></Row>
              <Row inner h="h-[18px]"><Check id="fb" on>Force Bounds</Check></Row>
              <Row inner h="h-[18px]"><Check id="is">Invert Sign</Check></Row>
              <Row inner label="Sign Sweep Threshold" id="ss"><Num id="ss" v="2" w="w-[81px]" /><Slider pct={20} label="Sign Sweep Threshold" /></Row>
              <Row inner label="Max Sign Sweep Co..." id="ms"><Num id="ms" v="3" w="w-[81px]" /><Slider pct={30} ticks={11} label="Max Sign Sweep Count" /></Row>
              <Row inner label="Offset Surface" id="os"><Num id="os" v="0" w="w-[81px]" /><Slider pct={0} label="Offset Surface" /></Row>
              <Row inner label="Proxy Volume" id="pv">
                <input id="pv" className="h-[19px] min-w-0 flex-1 border border-[#777] bg-white px-1" />
                <span className="flex gap-[5px] px-[4px]"><Jump /><Chooser /></span>
              </Row>
              <Row inner label="File Mode" id="fm"><Pick id="fm" value="No Operation" w="w-[107px]" /></Row>
              <Row inner label="File" id="file">
                <input id="file" className="h-[19px] min-w-0 flex-1 border border-[#777] bg-white px-1" />
                <button aria-label="File history" className="ml-[2px] flex h-[20px] w-[18px] items-center justify-center rounded-sm bg-[#858585]"><Tri c="#fff" s="size-[6px]" /></button>
                <span className="ml-[6px] mr-[2px]">
                  <Svg s="size-[15px]"><path d="M5 3h6l4 4v10H5z" fill="#eee" stroke="#777" /><path d="M9 8l7 6-4 1-2 3z" fill="#222" /></Svg>
                </span>
              </Row>
            </div>
          </div>
        </div>
      </div>
    </section>
  );
}

/* ---------- network toolbar ---------- */

const netLeft: [string, React.ReactNode][] = [
  ["Tree", <path d="M4 2h5v3H4zM8 8h5v3H8zM8 14h5v3H8zM6 5v11h2M6 9h2" stroke="#888" strokeWidth="1.500" fill="#ccc" />],
  ["List", <><path d="M3 1h14v18H3z" fill="#f2f8f2" stroke="#777" /><path d="M3 6h14M3 10h14M3 14h14" stroke="#9fbf9f" strokeWidth="1.500" /></>],
  ["Parameters", <><path d="M7 2h11v15H7z" fill="#eee" stroke="#bbb" /><path d="M2 7h10v11H2z" fill="#f4f4f4" stroke="#444" strokeWidth="1.300" /><path d="M5 16v-5h4v5" stroke="#444" strokeWidth="1.500" /></>],
];

const aligns: [string, string][] = [
  ["Stack vertically", "M6 2h8v5H6zM6 13h8v5H6zM10 7v6"],
  ["Stack horizontally", "M1 7h6v6H1zM13 7h6v6h-6zM7 10h6"],
  ["Snap to column", "M1 2h8v6H1zM11 13h8v5h-8z"],
  ["Snap to row", "M1 3h8v6H1zM11 12h8v6h-8z"],
  ["Snap to cell", "M1 2h8v6H1zM11 13h8v5h-8z"],
];

function NetToolbar() {
  return (
    <div className="flex h-[28px] shrink-0 items-center border-b border-[#222] bg-gradient-to-b from-[#dcdcdc] to-[#cdcdcd]">
      <div className="h-full w-[7px] border-r border-[#333] bg-[#eee] pt-[3px]"><Tri d="up" c="#777" s="size-[5px]" /></div>
      <div className="flex items-center gap-[5px] pl-[6px]">
        {netLeft.map(([n, d]) => (
          <button key={n} aria-label={n} className="px-px"><Svg s="size-[15px]">{d}</Svg></button>
        ))}
        <button aria-label="Colour palette" className="flex size-[22px] items-center justify-center border-2 border-[#444] bg-[#777]">
          <Svg s="size-[14px]">
            <path d="M0 0h20v20H0z" fill="#f4f4f4" />
            <path d="M2 2h4v4H2z" fill="#c00" /><path d="M8 2h4v4H8z" fill="#e80" /><path d="M14 2h4v4h-4z" fill="#ec3" />
            <path d="M2 8h4v4H2z" fill="#333" /><path d="M8 8h4v4H8z" fill="#4a4" /><path d="M14 8h4v4h-4z" fill="#8c5" />
            <path d="M2 14h4v4H2z" fill="#111" /><path d="M8 14h4v4H8z" fill="#47d" /><path d="M14 14h4v4h-4z" fill="#83c" />
          </Svg>
        </button>
        <button aria-label="Network box" className="ml-[7px]"><Svg s="size-[14px]"><path d="M1 1h18v18H1z" fill="#999" stroke="#333" strokeWidth="2" /><path d="M4 5h8v5H4zM9 11h8v5H9z" fill="#fff" stroke="#222" strokeWidth="1.500" /></Svg></button>
        <button aria-label="Sticky note" className="ml-[3px]"><Svg s="size-[14px]"><path d="M1 1h18v12l-6 6H1z" fill="#f6e03a" stroke="#6b5e00" strokeWidth="1.500" /><path d="M4 6h12M4 10h9M13 19v-6h6" stroke="#333" strokeWidth="1.500" /></Svg></button>
        <button aria-label="Package" className="ml-[3px]"><Svg s="size-[14px]"><path d="M3 9h14v8c-4 2-10 2-14 0z" fill="#c9731a" /><path d="M1 6c2-4 16-4 18 0v4H1z" fill="#efa24a" stroke="#9b5810" /></Svg></button>
      </div>
      <div className="ml-auto flex items-center gap-[8px] pr-[8px]">
        {aligns.map(([n, d], i) => (
          <button key={n} aria-label={n}>
            <Svg s="size-[14px]">
              {i === 2 && <path d="M10 0v20M13 0v20" stroke="#8fb0e0" strokeWidth="1.500" />}
              {i === 3 && <path d="M0 10h20M0 13h20" stroke="#8fb0e0" strokeWidth="1.500" />}
              {i === 4 && <path d="M0 5h20M0 10h20M0 15h20M5 0v20M10 0v20M15 0v20" stroke="#8fb0e0" />}
              <path d={d} stroke="#333" strokeWidth="2" strokeLinejoin="round" fill="#ddd" />
            </Svg>
          </button>
        ))}
        <button aria-label="Grid"><Svg s="size-[14px]"><path d="M0 4h20M0 10h20M0 16h20M4 0v20M10 0v20M16 0v20" stroke="#86a9dc" strokeWidth="1.500" /></Svg></button>
        <button aria-label="Find" className="ml-[8px]"><Svg s="size-[15px]"><circle cx="8" cy="8" r="6" fill="#eee" stroke="#888" strokeWidth="1.500" /><path d="M12 12l7 7" stroke="#999" strokeWidth="2.500" /></Svg></button>
        <button aria-label="Overview"><Svg s="size-[14px]"><path d="M1 1h18v18H1z" fill="#fff" stroke="#333" strokeWidth="2" /><path d="M3 10c3-6 11-6 14 0-3 5-11 5-14 0z" fill="#ccc" stroke="#222" /><circle cx="10" cy="10" r="3" fill="#111" /></Svg></button>
      </div>
    </div>
  );
}

/* ---------- play bar ---------- */

function Timeline() {
  const minor = Array.from({ length: 41 }, (_, i) => (i + 1) * 6);
  return (
    <div className="mb-[2px] flex min-w-0 flex-1 flex-col border-x border-[#aaa] bg-[#d9d9d9]">
      <div className="relative min-h-0 flex-1">
        <span className="absolute inset-x-0 top-[13px] h-px bg-[#aaa]" />
        {minor.map((f) => {
          const big = f % 24 === 0;
          return (
            <span key={f} className={`absolute w-px ${big ? "top-[9px] h-[9px] bg-[#333]" : "top-[10px] h-[7px] bg-[#999]"}`} style={{ left: `${((f - 1) / 250) * 100}%` }}>
              {big && <span className="absolute -top-[10px] left-px text-[10px] leading-[11px] text-[#555]">{f}</span>}
            </span>
          );
        })}
        <span className="absolute left-[1px] top-0 h-full w-[2px] bg-[#333]" />
        <span className="absolute -left-px top-0 flex h-[17px] w-[18px] items-center justify-center border border-white bg-[#111] text-[13px] leading-none text-white">1</span>
      </div>
      <div className="flex h-[8px] items-center justify-between border-b border-[#888] bg-gradient-to-b from-white to-[#cfcfcf]">
        {["justify-center w-[20px] border-r border-[#aaa]", "w-[14px]", "justify-center w-[20px] border-l border-[#aaa]"].map((c, i) => (
          <span key={i} className={`flex h-full items-center ${c}`}>
            <Svg s="h-[2px] w-[11px]" box="0 0 11 2"><path d="M0 1h11" stroke="#333" strokeWidth="2" strokeDasharray="2 1" /></Svg>
          </span>
        ))}
      </div>
    </div>
  );
}

const transport: [string, string, string][] = [
  ["First frame", "M2 3v14M5 3v14", "M12 4L6 10l6 6zM19 4l-6 6 6 6z"],
  ["Previous key", "M4 3v14", "M16 3L7 10l9 7z"],
  ["Play reverse", "", "M15 3L4 10l11 7z"],
  ["Stop", "", "M4 4h12v12H4z"],
  ["Play", "", "M5 3l11 7-11 7z"],
  ["Next key", "M16 3v14", "M4 3l9 7-9 7z"],
];

function PlayBar() {
  const box = "flex h-[22px] w-[21px] items-center justify-center border border-r-[#888] border-b-[#888] border-white bg-gradient-to-b from-white to-[#d6d6d6]";
  return (
    <footer className="flex h-[43px] shrink-0 items-stretch border-t-2 border-white bg-[#dcdcdc]">
      <div className="w-[8px] border-r border-[#333] bg-[#eee] pl-px pt-[35px]"><Tri c="#777" s="size-[5px]" /></div>
      <div className="flex items-center pb-[2px] pl-[6px]">
        {transport.map(([n, bar, d], i) => (
          <button
            key={n}
            aria-label={n}
            className={`flex h-[25px] w-[24px] items-center justify-center border-b-2 border-r border-[#999] ${i === 3 ? "bg-[#7c7c7c]" : "bg-gradient-to-b from-white to-[#d4d4d4]"}`}
          >
            <Svg s="size-[15px]">
              {bar && <path d={bar} stroke={i === 0 ? "#888" : "#5aa02c"} strokeWidth={i === 0 ? 1.5 : 4} />}
              <path d={d} fill="#f0f0f0" stroke={i === 3 ? "#fff" : "#777"} strokeWidth="1.300" />
            </Svg>
          </button>
        ))}
        <input aria-label="Current frame" defaultValue="1" className={`ml-[7px] h-[19px] w-[51px] border-2 border-[#888] bg-white px-[3px] ${mono}`} />
        <button aria-label="Decrease" className="flex h-[19px] w-[17px] items-center justify-center border-y-2 border-r border-[#888] bg-[#d8d8d8]"><span className="h-[3px] w-[8px] bg-[#888]" /></button>
        <button aria-label="Increase" className="flex h-[19px] w-[17px] items-center justify-center border-2 border-l-0 border-[#888] bg-[#d8d8d8]"><Plus /></button>
        <input aria-label="Start frame" defaultValue="1" className={`ml-[7px] mr-[2px] h-[19px] w-[43px] border-2 border-[#888] bg-[#e4e4e4] px-[3px] ${mono}`} />
      </div>
      <Timeline />
      <div className="flex items-center pb-[2px] pl-[2px] pr-[6px]">
        <input aria-label="End frame" defaultValue="250" className={`mr-[9px] h-[19px] w-[42px] border-2 border-[#888] bg-[#e4e4e4] px-[3px] ${mono}`} />
        <button aria-label="Set key" className={`mr-[4px] ${box}`}><Svg s="size-[15px]"><circle cx="6" cy="6" r="4" stroke="#aaa" strokeWidth="2" fill="#ddd" /><path d="M9 9l8 8M14 14l2-2" stroke="#aaa" strokeWidth="2.500" /></Svg></button>
        <button aria-label="Real time" className={box}><Svg s="size-[14px]"><circle cx="10" cy="10" r="7.500" fill="#fff" stroke="#333" strokeWidth="2" /><path d="M10 5v5h5M10 10v4" stroke="#333" strokeWidth="1.500" /></Svg></button>
        <button aria-label="Iron" className={box}><Svg s="size-[16px]"><path d="M1 14c0-5 4-6 9-6h8v6zM4 8c1-4 9-6 13-3l1 3M1 16h17" stroke="#333" strokeWidth="1.400" fill="#eee" /><path d="M12 15h8l-4 4z" fill="#111" /></Svg></button>
        <button aria-label="Audio" className={box}><Svg s="size-[15px]"><path d="M2 7h4l5-5v16l-5-5H2z" fill="url(#dark)" /><path d="M13 6c2 2 2 6 0 8M16 4c3 3 3 9 0 12" stroke="#567" strokeWidth="1.800" /></Svg></button>
        <button aria-label="Options" className={box}><Svg s="size-[14px]"><path d="M2 2h16v16H2z" fill="#fff" stroke="#222" strokeWidth="1.500" /><path d="M2 4h16" stroke="#333" strokeWidth="3.500" /><path d="M8 8l8 6-4 1-2 3z" fill="#222" /></Svg></button>
      </div>
    </footer>
  );
}

/* ---------- page ---------- */

export default function App() {
  return (
    <div className="flex h-screen min-w-[1200px] flex-col overflow-hidden bg-[#bdbdbd] font-['DejaVu_Sans_Condensed','DejaVu_Sans',sans-serif] text-[#222]">
      <Defs />

      <header className="flex h-[23px] shrink-0 items-center border-t border-[#2c3848] bg-gradient-to-b from-[#97b3d3] to-[#b8cfea] pl-[2px]">
        <Svg s="size-[16px]">
          <path d="M0 0h20v20H0z" fill="#e8622a" />
          <path d="M0 7c6-7 16-4 15 4-1 6-8 7-9 3s5-5 5-1M0 12c2-3 4-5 8-4" stroke="#fbd9c4" strokeWidth="1.800" />
        </Svg>
        <h1 className="ml-[8px] whitespace-nowrap pb-px font-['Noto_Sans',sans-serif] text-[12px] leading-none text-black">
          C:/Users/test/Documents/houdini15.5/Projects/SideFX-HOUDINI/Samples/debris_particles_sim.hip - Houdini FX 15.5.480
        </h1>
        <div className="ml-auto flex gap-[3px] pb-px pr-[3px]">
          {["Minimize", "Restore", "Close"].map((n, i) => (
            <button key={n} aria-label={n} className={`flex h-[17px] w-[30px] items-center justify-center rounded-sm border ${i === 2 ? "border-[#5c1d1d] bg-gradient-to-b from-[#e49a8c] to-[#c03a22]" : "border-[#5f7894] bg-gradient-to-b from-[#c5d7ea] to-[#9ab5d3]"}`}>
              <Svg s="size-[13px]" box="0 0 14 14">
                <path d={["M2 7h10v4H2z", "M5 1h8v7H5zM1 5h7v7H1zM3 8h3v2H3z", "M2 3h3l2 2 2-2h3L9 7l3 4H9L7 9l-2 2H2l3-4z"][i]} fill="#fff" stroke="#444" />
              </Svg>
            </button>
          ))}
        </div>
      </header>

      <div className="flex h-[26px] shrink-0 items-stretch border-b border-[#222] bg-gradient-to-b from-white to-[#dedede]">
        <div className="w-[8px] border-r border-[#333] pl-px pt-px"><Tri d="up" c="#777" s="size-[5px]" /></div>
        <nav className="flex items-center gap-[10px] pl-[6px] text-[13px] leading-none">
          {["File", "Edit", "Render", "Windows", "Assets", "Help"].map((m) => (
            <button key={m}>{m}</button>
          ))}
        </nav>
        <div className="ml-auto flex items-center pr-[9px]">
          <span className="mr-[10px]"><Check id="takes">Auto Takes</Check></span>
          <Pick id="take" label="Take" value="Main" w="w-[129px]" h="h-full" />
          <span className="ml-[8px]"><HelpIcon /></span>
        </div>
      </div>

      <div className="flex shrink-0">
        <div className="w-[8px] border-r border-[#333] bg-[#eee] pl-px pt-px"><Tri d="up" c="#777" s="size-[5px]" /></div>
        <div className="w-[669px] shrink-0">
          <Shelf
            label="Create shelf"
            tabPad="pl-[7px] pr-[8px]"
            toolPad="pl-[4px] pr-[5px]"
            tabs={["Create", "Modify", "Model", "Polygon", "Deform", "Texture", "Rigging", "Character", "Animation", "Hair", "Grooming", "Cloud FX", "Volume"]}
            tools={["Box", "Sphere", "Tube", "Torus", "Grid", "Metaball", "L-System", "Platonic Sol...", "Curve", "Draw Curve", "Spray Paint", "Circle", "Font", "File", "Null", "Rivet", "Sticky"]}
          />
        </div>
        <div className="flex w-[7px] items-center justify-center border-r border-[#333] bg-[#d8d8d8]">
          <Svg s="h-[16px] w-[2px]" box="0 0 2 16"><path d="M1 0v16" stroke="#222" strokeWidth="2" strokeDasharray="2 1" /></Svg>
        </div>
        <div className="min-w-0 flex-1">
          <Shelf
            label="Lights shelf"
            tabPad="px-[8px]"
            toolPad="px-[5px]"
            tabs={["Lights and C...", "Particles", "Grains", "Rigid Bodies", "Particle Fluids", "Viscous Fluids", "Ocean FX", "Fluid Contai...", "Populate Cont...", "Container Tools", "Pyro FX", "Cloth", "Solid", "Wires", "Crowds", "Drive Simula..."]}
            tools={["Camera", "Point Light", "Spot Light", "Area Light", "Geometry L...", "Volume Light", "Distant Light", "Environme...", "Sky Light", "GI Light", "Caustic Light", "Portal Light", "Ambient Li...", "Stereo Cam...", "VR Camera", "Switcher"]}
          />
        </div>
      </div>

      <div className="flex min-h-0 flex-1">
        <div className="flex w-[551px] shrink-0 flex-col">
          <div className="flex h-[556px] shrink-0">
            <div className="flex min-w-0 flex-1 flex-col border-x border-black">
              <PaneTabs tabs={[{ t: "Scene View", w: "w-[85px]" }, { t: "Render View", w: "w-[90px]" }]} />
              <PathBar>
                <Pin />
                <span className="ml-[7px]"><Target /></span>
                <span className="ml-[14px] flex items-center gap-[6px]">
                  <Svg s="size-[17px]"><path d="M2 5l8-3 6 3v9l-7 3-7-4z" fill="#7f97a6" stroke="#445" /><path d="M2 5l8-3 6 3-7 3z" fill="#c6d2d9" /><path d="M12 15h8l-4 4z" fill="#111" /></Svg>
                  <Svg s="size-[17px]"><path d="M1 2h10v10H1z" fill="#c5cbce" /><circle cx="12" cy="9" r="6" fill="url(#blue)" /><path d="M12 15h8l-4 4z" fill="#111" /></Svg>
                  <Svg s="size-[17px]"><path d="M2 2h15v15H2z" fill="#f2f2f2" stroke="#444" strokeWidth="1.500" /><path d="M12 15h8l-4 4z" fill="#111" /></Svg>
                </span>
              </PathBar>
              <div className="flex h-[32px] shrink-0 items-center border-b border-[#222] bg-gradient-to-b from-[#d4d4d4] to-[#dcdcdc]">
                <div className="h-full w-[8px] border-r border-[#333] bg-[#eee] pt-[2px]"><Tri d="up" c="#777" s="size-[5px]" /></div>
                <span className="ml-[4px] mr-[4px]"><CameraIcon s="size-[16px]" /></span>
                <b className="text-[12px]">View</b>
                <span className="ml-auto flex items-center gap-[9px] pr-[5px]">
                  <Svg s="size-[16px]"><circle cx="5" cy="4" r="2.500" fill="#38608f" /><circle cx="5" cy="13" r="2.500" fill="#38608f" /><circle cx="13" cy="8" r="2.500" fill="#38608f" /><path d="M1 8h8M1 18h8M9 13h8" stroke="#444" strokeWidth="2" /><path d="M12 15h8l-4 4z" fill="#111" /></Svg>
                  <HelpIcon />
                </span>
              </div>
              <div className="flex min-h-0 flex-1">
                <LeftBar />
                <div className="relative min-w-0 flex-1">
                  <Scene />
                  <div className="absolute right-[8px] top-[5px] flex gap-[4px]">
                    {["persp1", "no cam"].map((c) => (
                      <button key={c} className="flex h-[15px] items-center border border-[#c2c23a] bg-black px-px font-['DejaVu_Sans',sans-serif] text-[11px] leading-none text-[#d2d23c]">
                        {c}
                        <Tri c="#d2d23c" s="size-[7px]" />
                      </button>
                    ))}
                  </div>
                </div>
                <RightBar />
              </div>
            </div>
            <div className="w-[5px] border-r border-black bg-[#b5b5b5]" />
          </div>
          <div className="flex h-[4px] shrink-0 items-center justify-center gap-[16px] bg-[#d8d8d8]">
            <Tri d="up" s="size-[5px]" />
            <Svg s="h-[4px] w-[13px]" box="0 0 13 4"><path d="M0 1h13M0 3h13" stroke="#222" strokeDasharray="2 1" /></Svg>
            <Tri s="size-[5px]" />
          </div>
          <div className="flex min-h-0 flex-1 flex-col border-x border-black">
            <PaneTabs tabs={[{ t: "Geometry Spreadsheet", w: "w-[132px]" }, { t: "Render View", w: "w-[90px]" }]} />
            <PathBar>
              <Pin />
              <span className="ml-[7px]"><Target /></span>
            </PathBar>
            <Spreadsheet />
          </div>
        </div>

        <div className="flex w-[6px] shrink-0 flex-col items-center border-r border-black bg-[#b5b5b5] pt-[250px]">
          <Tri d="left" s="size-[5px]" />
          <span className="my-[12px]"><Svg s="h-[13px] w-[4px]" box="0 0 4 13"><path d="M1 0v13M3 0v13" stroke="#222" strokeDasharray="2 1" /></Svg></span>
          <Tri d="right" s="size-[5px]" />
        </div>

        <div className="flex min-w-0 flex-1 flex-col">
          <div className="flex h-[4px] shrink-0 items-center justify-center gap-[10px] bg-[#d0d0d0]">
            <Tri s="size-[5px]" />
            <Svg s="h-[4px] w-[13px]" box="0 0 13 4"><path d="M0 1h13M0 3h13" stroke="#222" strokeDasharray="2 1" /></Svg>
            <Tri s="size-[5px]" />
          </div>
          <PaneTabs
            tabs={[
              { t: "/obj/PARTICLES_SIM", w: "w-[118px]", i: true },
              { t: "Render Scheduler", w: "w-[112px]" },
              { t: "Tree View", w: "w-[78px]" },
              { t: "Material Palette", w: "w-[103px]" },
              { t: "Asset Browser", w: "w-[97px]" },
            ]}
          />
          <PathBar>
            <Pin />
            <span className="ml-[7px]"><Target /></span>
            <span className="ml-[16px]"><Gear /></span>
          </PathBar>
          <NetToolbar />
          <Network />
        </div>
      </div>

      <PlayBar />

      <div className="flex h-[24px] shrink-0 items-center justify-end border-y border-t-[#333] border-b-2 border-b-black bg-[#d0d0d0]">
        <Svg s="size-[17px]"><path d="M3 9c0-5 12-8 14 0 0 6-6 5-7 9-3 0-6-4-7-9z" fill="#ddd" stroke="#999" /><path d="M6 6l3 8M10 4l1 10M14 6l-2 8" stroke="#aaa" /><path d="M15 12l5 4-5 4z" fill="#111" /></Svg>
        <span className="ml-[4px]"><Pick id="simpath" label="Simulation" value="/obj/PARTICLES_..." w="w-[125px]" /></span>
        <button aria-label="Refresh" className="mx-[3px]"><Svg s="size-[17px]"><path d="M3 9c0-6 9-8 12-3l2-2v6h-6l2-2c-3-3-7-1-7 1zM17 12c0 6-9 8-12 3l-2 2v-6h6l-2 2c3 3 7 1 7-1z" fill="#eee" stroke="#777" /></Svg></button>
        <Pick id="upd" label="Update mode" value="Auto Update" w="w-[110px]" h="h-full" />
      </div>

      <div className="flex h-[9px] shrink-0 items-stretch gap-[2px] overflow-hidden bg-gradient-to-b from-[#8ca0b5] to-[#7287a0]" aria-label="Taskbar">
        <span className="flex w-[58px] justify-center"><span className="mt-px h-[20px] w-[28px] rounded-full border-2 border-[#cfe0ee] bg-[#2f5f8c]" /></span>
        {[
          ["w-[157px] bg-[#bfc9d3]", "bg-[#ead98c] w-[16px]"],
          ["w-[125px]", "bg-[#3aa4dc] w-[14px] rounded-full"],
          ["w-[159px] bg-[#aab8c6]", "bg-[#e77a7a] w-[8px]"],
          ["w-[160px] bg-[#dfe5eb]", "bg-[#ee6a26] w-[32px]"],
          ["w-[160px] bg-[#aab8c6]", "bg-[#e6e6e6] w-[20px]"],
          ["w-[159px] bg-[#aab8c6]", "bg-[#d3a45a] w-[8px]"],
        ].map(([b, ic], i) => (
          <span key={i} className={`rounded-t-sm border-x border-[#dde6ee] pl-[10px] pt-[3px] ${b}`}>
            <span className={`block h-[8px] ${ic}`} />
          </span>
        ))}
      </div>
    </div>
  );
}
